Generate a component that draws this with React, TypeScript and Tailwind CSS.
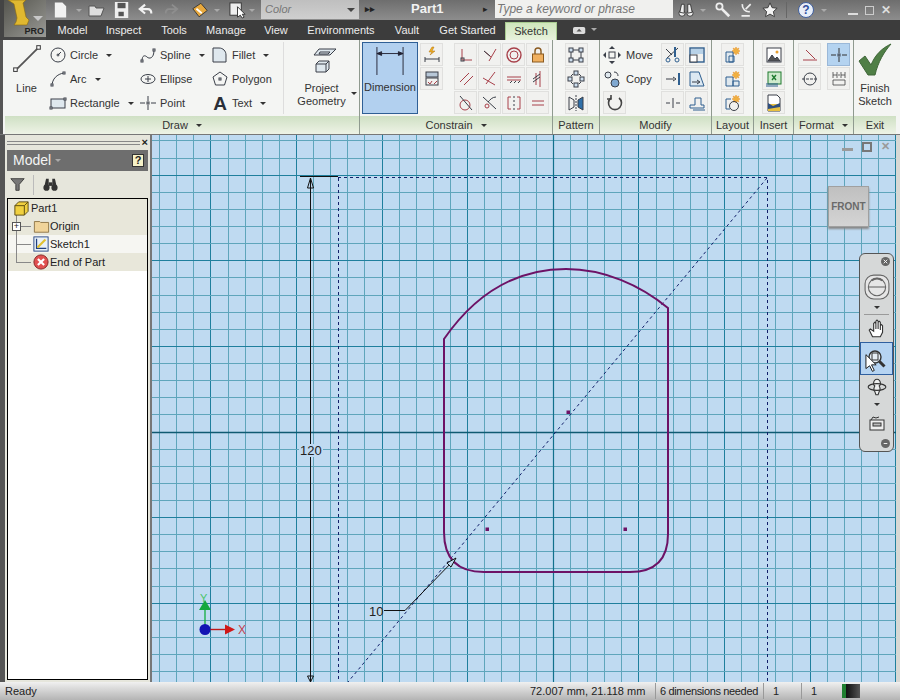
import type { ReactNode } from 'react';

const red = '#a8404a';
const dark = '#3a3f48';
const blue = '#2f5f8f';

function Ic({ children, s = 18 }: { children: ReactNode; s?: number }) {
  return (
    <svg viewBox="0 0 18 18" width={s} height={s} fill="none" stroke={dark} strokeWidth="1" className="shrink-0">
      {children}
    </svg>
  );
}

function Caret({ light }: { light?: boolean }) {
  return <span className={`inline-block w-0 h-0 border-x-[3px] border-x-transparent border-t-[3px] ${light ? 'border-t-[#aaaaaa]' : 'border-t-[#333333]'}`} />;
}

function DrawItem({ icon, label, caret }: { icon: ReactNode; label: string; caret?: boolean }) {
  return (
    <div className="h-6 flex items-center">
      <div className="w-5 flex justify-center shrink-0">{icon}</div>
      <span className="ml-[2px] text-[#333]">{label}</span>
      {caret && <span className="ml-2 flex"><Caret /></span>}
    </div>
  );
}

function Btn({ children, active }: { children?: ReactNode; active?: boolean }) {
  return (
    <div className={`w-[23px] h-[23px] flex items-center justify-center border ${active ? 'bg-[#b4d3f0] border-[#9ab8d8]' : 'bg-[#f1f1ef] border-[#e0e0de]'}`}>
      {children}
    </div>
  );
}

function Panel({ w, label, caret, children, last }: { w: string; label: string; caret?: boolean; children: ReactNode; last?: boolean }) {
  return (
    <div className={`${w} shrink-0 flex flex-col ${last ? '' : 'border-r border-[#8f9a8f]'}`}>
      <div className="h-[76px] flex overflow-hidden">{children}</div>
      <div className="h-[18px] bg-gradient-to-b from-[#cfe0c4] to-[#eef3e6] flex items-center justify-center gap-2 text-[#333]">
        {label}
        {caret && <Caret />}
      </div>
    </div>
  );
}

const constrainIcons: ReactNode[] = [
  <Ic key="a"><path d="M5 3v11h10" stroke={red} /><rect x="4" y="12" width="3" height="3" stroke={dark} /></Ic>,
  <Ic key="b"><path d="M3 5l7 6M15 3L8 15" stroke={red} /><path d="M3 5l6 5" stroke={dark} /></Ic>,
  <Ic key="c"><circle cx="9" cy="9" r="7" stroke={red} strokeWidth="1.4" /><circle cx="9" cy="9" r="4" stroke={red} /></Ic>,
  <Ic key="d"><rect x="3.5" y="8" width="11" height="8" fill="#f0b060" stroke="#8a5a20" /><path d="M6 8V5a3 3 0 016 0v3" stroke="#8a5a20" strokeWidth="1.4" /></Ic>,
  <Ic key="e"><path d="M3 12l9-9M7 15l9-9" stroke={red} /></Ic>,
  <Ic key="f"><path d="M14 2L5 14M2 8l12 7" stroke={red} /></Ic>,
  <Ic key="g"><path d="M2 7h14M2 10h14" stroke={red} /><path d="M5 13l2-2M9 13l2-2M13 13l2-2" stroke={dark} /></Ic>,
  <Ic key="h"><path d="M7 3v12M11 1v16" stroke={red} /><path d="M4 12l7-5M4 9l7-5" stroke={dark} /></Ic>,
  <Ic key="i"><circle cx="8" cy="11" r="5" stroke={red} /><path d="M3 2l12 14" stroke={dark} /></Ic>,
  <Ic key="j"><path d="M2 3l13 12M15 3c-4 0-6 3-8 5" stroke={dark} /><circle cx="6" cy="12" r="2" stroke={red} /></Ic>,
  <Ic key="k"><path d="M6 3H3v12h3M12 3h3v12h-3" stroke={red} /><path d="M9 2v14" stroke={dark} strokeDasharray="2 2" /></Ic>,
  <Ic key="l"><path d="M3 7h12M3 11h12" stroke={red} /></Ic>,
];

const modifyRows: ReactNode[][] = [
  [
    <Ic key="a"><path d="M2 3l6 6M14 2L3 12" stroke={dark} /><circle cx="4" cy="14" r="2" stroke={blue} /><circle cx="13" cy="14" r="2" stroke={blue} /><path d="M11 1v10" stroke={blue} strokeWidth="2" /></Ic>,
    <Ic key="b"><rect x="2" y="2" width="14" height="14" stroke={blue} strokeWidth="1.4" /><rect x="2" y="9" width="7" height="7" fill="#fff" stroke={dark} /><rect x="3" y="3" width="12" height="5" fill="#b8d2e8" stroke="none" /></Ic>,
  ],
  [
    <Ic key="a"><path d="M2 9h8M5 9h0M15 3v12" stroke={dark} /><path d="M15 3v12" stroke={blue} strokeWidth="2" /><path d="M9 7l3 2-3 2" stroke={dark} /></Ic>,
    <Ic key="b"><path d="M2 2h9l5 14H2z" stroke={blue} fill="#dce8f2" /><path d="M4 12h7M9 10l3 2-3 2" stroke={dark} /></Ic>,
  ],
  [
    <Ic key="a"><path d="M2 9h4M12 9h4M9 4v10" stroke={dark} /></Ic>,
    <Ic key="b"><path d="M2 14h14v-3h-3V4H7v7H2z" stroke={blue} /><path d="M5 16h12" stroke={blue} /></Ic>,
  ],
];

// grid lines are worked out here so that every line lands on a whole pixel
const step = 17.12;
const vLines = Array.from({ length: 60 }, (_, i) => ({ i: i - 30, x: Math.floor(553.3 + (i - 30) * step) + 0.5 })).filter((l) => l.x > 152 && l.x < 896);
const hLines = Array.from({ length: 60 }, (_, i) => ({ i: i - 30, y: Math.floor(432 + (i - 30) * step) + 0.5 })).filter((l) => l.y > 135 && l.y < 682);

function ProfileCanvas() {
  const profile = 'M444 339 C478 290 520 269 566 269 C604 269 640 285 668 308 V534 Q668 572 630 572 H484 Q444 572 444 532 Z';
  return (
    <svg viewBox="152 135 744 547" width="744" height="547" className="block">
      <rect x="152" y="135" width="744" height="547" fill="#bfdaf1" />
      {vLines.map((l) => (
        <path key={l.i} d={`M${l.x} 135V682`} stroke={l.i % 5 === 0 ? '#1f7f9d' : '#5fa5bb'} />
      ))}
      {hLines.map((l) => (
        <path key={l.i} d={`M152 ${l.y}H896`} stroke={l.i % 5 === 0 ? '#1f7f9d' : '#5fa5bb'} />
      ))}
      <path d="M152 432.5H896" stroke="#0f5a72" strokeWidth="1.5" />
      <path d="M553.5 135V682" stroke="#10708c" strokeWidth="1.2" />

      <path d="M338.5 178V682M338 177.5H767.5V682" stroke="#12206a" strokeDasharray="3 3" fill="none" />
      <path d="M767 178L348 682" stroke="#12206a" strokeDasharray="3 3" fill="none" />
      <path d="M300 176.5H338" stroke="#111" />
      <path d="M310.5 178V682" stroke="#111" />
      <path d="M310.5 178l-3 10h6z" fill="none" stroke="#111" />
      <path d="M310.5 682l-3-6h6z" fill="none" stroke="#111" />

      <path d={profile} stroke="#6d1266" strokeWidth="2" fill="none" />
      <rect x="566.5" y="410.5" width="3.5" height="3.5" fill="#6d1266" />
      <rect x="485.5" y="527.5" width="3.5" height="3.5" fill="#6d1266" />
      <rect x="623.5" y="527.5" width="3.5" height="3.5" fill="#6d1266" />

      <path d="M384 610.5H405L456 558" stroke="#111" fill="none" />
      <path d="M456 558l-9 5 4 4z" fill="#bfdaf1" stroke="#111" />

      <path d="M205 629V604" stroke="#1fb04a" strokeWidth="1.4" />
      <path d="M205 600l-6 10h12z" fill="#14a83e" />
      <path d="M205 629.5H228" stroke="#c01818" strokeWidth="1.4" />
      <path d="M235 629.5l-10-5v10z" fill="#d01818" />
      <circle cx="205" cy="629.5" r="5.5" fill="#1414b4" />
    </svg>
  );
}

function NavBar() {
  return (
    <div className="absolute left-[707px] top-[118px] w-[35px] h-[199px] bg-[#d6d8d8] border border-[#555] rounded-md flex flex-col items-center">
      <svg viewBox="0 0 10 10" width="9" height="9" className="mt-[3px] self-end mr-[3px]"><circle cx="5" cy="5" r="5" fill="#666" /><path d="M3 3l4 4M7 3l-4 4" stroke="#fff" /></svg>
      <svg viewBox="0 0 24 24" width="26" height="26" fill="none" stroke="#666" className="mt-[8px]">
        <rect x="1" y="1" width="22" height="22" rx="8" fill="#e6e6e6" />
        <circle cx="12" cy="12" r="8" /><path d="M4 12h16" /><path d="M7 6a8 8 0 0110 0" strokeWidth="2" />
      </svg>
      <div className="mt-[6px] flex"><Caret /></div>
      <div className="w-[25px] h-px bg-[#9a9a9a] mt-[5px]" />
      <svg viewBox="0 0 18 18" width="20" height="20" fill="#fff" stroke="#333" className="mt-[4px]">
        <path d="M5 16l-3-6 1-1 3 2V4l1-1 1 1v5V2l1-1 1 1v7V3l1-1 1 1v7V6l1-1 1 1v6l-2 4z" />
      </svg>
      <div className="relative w-[33px] h-[33px] mt-[3px] bg-[#b6d4f2] border border-[#2f5f9f] flex items-center justify-center">
        <svg viewBox="0 0 20 20" width="20" height="20" fill="none" stroke="#333">
          <circle cx="8" cy="8" r="6" fill="#e6eef5" strokeWidth="1.4" /><rect x="5" y="4" width="6" height="7" /><path d="M12.5 12.5l5 5" strokeWidth="3" />
        </svg>
        <svg viewBox="0 0 14 20" width="13" height="20" className="absolute left-[4px] top-[10px]">
          <path d="M1 1v15l4-3 3 6 2-1-3-6h5z" fill="#fff" stroke="#111" />
        </svg>
      </div>
      <svg viewBox="0 0 18 18" width="20" height="20" fill="none" stroke="#333" className="mt-[2px]">
        <path d="M9 2c2 0 3 2 3 3v2l-1 1c1 2 1 4 0 5l-1 3H8l-1-3c-1-1-1-3 0-5L6 7V5c0-1 1-3 3-3z" fill="#eef0f0" />
        <ellipse cx="9" cy="9" rx="8" ry="3" />
      </svg>
      <div className="mt-[6px] flex"><Caret /></div>
      <svg viewBox="0 0 18 18" width="18" height="18" fill="none" stroke="#333" className="mt-[8px]">
        <rect x="2" y="6" width="14" height="10" fill="#eee" /><rect x="5" y="9" width="8" height="3" fill="#bbb" /><path d="M3 6l2-3 3 1 3-1" />
      </svg>
      <svg viewBox="0 0 10 10" width="9" height="9" className="mt-auto mb-[3px] self-end mr-[3px]"><circle cx="5" cy="5" r="5" fill="#666" /><path d="M3 5h4" stroke="#fff" /></svg>
    </div>
  );
}

function TreeRow({ label, icon, light, plus, more }: { label: string; icon: ReactNode; light?: boolean; plus?: boolean; more?: boolean }) {
  return (
    <div className={`h-[18px] flex items-center ${light ? 'bg-[#f6f6f2]' : 'bg-[#e8e7da]'} text-[#222]`}>
      <div className="w-[24px] h-full relative shrink-0">
        <div className={`absolute left-[8px] top-0 w-px bg-[#888] ${more ? 'h-full' : 'h-[9px]'}`} />
        <div className="absolute left-[8px] top-[9px] w-[15px] h-px bg-[#888]" />
        {plus && (
          <div className="absolute left-[4px] top-[5px] w-[9px] h-[9px] border border-[#555] bg-white flex items-center justify-center text-[9px] leading-none">+</div>
        )}
      </div>
      <div className="w-[18px] flex justify-center shrink-0">{icon}</div>
      <span>{label}</span>
    </div>
  );
}

export default function App() {
  return (
    <div className="w-[900px] h-[700px] overflow-hidden flex flex-col bg-[#555] text-[11px]" style={{ fontFamily: '"Liberation Sans", Arial, sans-serif' }}>
      {/* title + tabs */}
      <div className="h-10 flex shrink-0">
        <div className="w-[46px] pl-[4px] bg-[#444] shrink-0">
          <div className="w-[42px] h-[37px] bg-gradient-to-br from-[#55554e] to-[#9a9a96] relative overflow-hidden">
            <svg viewBox="0 0 42 37" width="42" height="37" className="absolute left-0 top-0">
              <path d="M4 0h18l-3 3 3 14 3 3-2 5H10l2-3 1-4-3-14z" fill="#e0b830" stroke="#8a6a10" strokeWidth=".6" />
              <path d="M29 16h10l-5 5z" fill="#c8c8c8" />
            </svg>
            <span className="absolute right-[2px] bottom-[1px] text-[9px] leading-none font-bold text-[#222]">PRO</span>
          </div>
        </div>
        <div className="flex-1 flex flex-col min-w-0">
          <div className="h-5 bg-gradient-to-b from-[#6e6e6e] to-[#8d8d8d] flex items-center relative">
            <div className="flex items-center pl-[6px] shrink-0">
              <svg viewBox="0 0 18 18" width="17" height="18" className="shrink-0"><path d="M3 1h8l4 4v12H3z" fill="#f2f2f2" /></svg>
              <span className="ml-[7px] flex"><Caret light /></span>
              <svg viewBox="0 0 18 18" width="18" height="18" className="ml-[6px] shrink-0"><path d="M1 5h6l1 2h8l-3 8H1z" fill="#dedede" stroke="#555" /></svg>
              <svg viewBox="0 0 18 18" width="16" height="18" className="ml-[8px] shrink-0"><rect x="1" y="0" width="15" height="18" fill="#efefef" /><rect x="4" y="1" width="9" height="6" fill="#555" /><rect x="5" y="11" width="6" height="5" fill="#555" /></svg>
              <svg viewBox="0 0 18 18" width="16" height="16" fill="none" stroke="#f2f2f2" strokeWidth="2.4" className="ml-[8px] shrink-0"><path d="M8 3L2 8l6 5M3 8h8c3 0 4 2 4 5" /></svg>
              <svg viewBox="0 0 18 18" width="16" height="16" fill="none" stroke="#8e8e8e" strokeWidth="2" className="ml-[9px] shrink-0"><path d="M10 3l6 5-6 5M15 8H7c-3 0-4 2-4 5" /></svg>
              <svg viewBox="0 0 20 18" width="18" height="17" className="ml-[12px] shrink-0"><path d="M2 7l9-6 7 8-9 7z" fill="#e8a83c" stroke="#333" /><path d="M6 7l6 5" stroke="#fff" strokeWidth="2" /></svg>
              <span className="ml-[5px] flex"><Caret light /></span>
              <svg viewBox="0 0 18 18" width="17" height="17" fill="#eee" stroke="#333" className="ml-[9px] shrink-0"><rect x="1" y="1" width="12" height="13" /><path d="M9 5v11l3-2 2 3 2-1-2-3h3z" fill="#fff" /></svg>
              <span className="ml-[3px] flex"><Caret light /></span>
            </div>
            <div className="absolute left-[215px] top-0 w-[98px] h-[19px] bg-gradient-to-b from-[#bfbfbf] to-[#cfcfcf] flex items-center justify-between pl-1 pr-1 italic text-[#777]">
              Color
              <span className="inline-block w-0 h-0 border-x-[4px] border-x-transparent border-t-[4px] border-t-[#444]" />
            </div>
            <span className="absolute left-[319px] top-[5px] text-[#222] text-[9px] leading-none font-bold">▸▸</span>
            <span className="absolute left-[365px] top-[2px] text-[13px] leading-none font-bold text-[#f2f2f2]">Part1</span>
            <span className="absolute left-[437px] top-[5px] text-[#222] text-[9px] leading-none">▸</span>
            <div className="absolute left-[449px] top-0 w-[178px] h-[18px] bg-[#f0f0ee] flex items-center px-[2px] italic text-[12px] text-[#777]">
              Type a keyword or phrase
            </div>
            <div className="absolute left-[632px] top-0 h-5 flex items-center">
              <svg viewBox="0 0 18 18" width="16" height="17" fill="#eee" stroke="#333" className="shrink-0"><circle cx="4.5" cy="12" r="3.5" /><circle cx="13.5" cy="12" r="3.5" /><path d="M2 11l2-9h3v10zM16 11l-2-9h-3v10z" /></svg>
              <span className="ml-[6px] flex"><Caret light /></span>
              <svg viewBox="0 0 18 18" width="16" height="16" className="ml-[9px] shrink-0" fill="none"><circle cx="5" cy="5" r="3.5" stroke="#eee" strokeWidth="2" /><path d="M8 8l8 8" stroke="#eee" strokeWidth="3" /></svg>
              <svg viewBox="0 0 18 18" width="15" height="16" className="ml-[8px] shrink-0" fill="none" stroke="#eee" strokeWidth="2"><path d="M4 2a8 8 0 009 9M8 8l6-6M3 16h10" /></svg>
              <svg viewBox="0 0 18 18" width="16" height="16" className="ml-[8px] shrink-0"><path d="M9 1l2.4 5.4 5.6.6-4.2 3.8 1.2 5.7L9 13.6 4 16.5l1.2-5.7L1 7l5.6-.6z" fill="#f4f4f4" stroke="#333" /></svg>
              <div className="w-px h-4 bg-[#666] ml-[8px]" />
              <div className="ml-[11px] w-[16px] h-[16px] rounded-full bg-[#e8eef8] border border-[#3f5f9f] text-[#2f4f9f] font-bold text-[12px] leading-[14px] text-center shrink-0">?</div>
              <span className="ml-[7px] flex"><Caret light /></span>
              <div className="ml-[21px] w-[10px] h-[2px] bg-[#ddd] mt-2 shrink-0" />
              <div className="ml-[7px] w-[9px] h-[9px] border border-[#ccc] shrink-0" />
              <span className="ml-[7px] text-[#ddd] font-bold text-[12px] leading-none">✕</span>
            </div>
          </div>
          <div className="h-5 bg-[#3c3c3c] flex items-stretch text-[#ececec]">
            <div className="w-[2px]" />
            {[
              ['Model', 'w-[49px]'],
              ['Inspect', 'w-[53px]'],
              ['Tools', 'w-[48px]'],
              ['Manage', 'w-[56px]'],
              ['View', 'w-[44px]'],
              ['Environments', 'w-[86px]'],
              ['Vault', 'w-[46px]'],
              ['Get Started', 'w-[75px]'],
            ].map(([t, w]) => (
              <div key={t} className={`${w} flex items-center justify-center`}>{t}</div>
            ))}
            <div className="w-[52px] mt-[2px] bg-gradient-to-b from-[#cfe6bc] to-[#e8f2dc] border border-[#a8cc90] border-b-0 text-[#333] flex items-center justify-center">
              Sketch
            </div>
            <svg viewBox="0 0 16 10" width="14" height="9" className="ml-[16px] mt-[6px]"><rect x="0" y="1" width="14" height="8" rx="2" fill="#ddd" /><path d="M4 6l3-3 3 3" fill="#555" /></svg>
            <span className="ml-[4px] mt-[8px] flex self-start"><Caret light /></span>
          </div>
        </div>
      </div>

      {/* ribbon */}
      <div className="h-[95px] shrink-0 flex bg-[#f4f5f3] border-b border-b-[#777] pl-[5px] relative">
        <div className="absolute left-0 top-0 h-full w-[3px] bg-[#555]" />
        <div className="flex">
          <Panel w="w-[355px]" label="Draw" caret>
            <div className="w-[43px] shrink-0 flex flex-col items-center pt-[3px]">
              <Ic s={32}>
                <path d="M3 15L15 3" stroke="#555" />
                <rect x="1.5" y="14" width="2" height="2" fill="#fff" stroke="#444" strokeWidth=".6" />
                <rect x="14.5" y="1.5" width="2" height="2" fill="#fff" stroke="#444" strokeWidth=".6" />
              </Ic>
              <span className="mt-[5px] text-[#333]">Line</span>
            </div>
            <div className="w-[90px] shrink-0 pt-[3px]">
              <DrawItem label="Circle" caret icon={<Ic><circle cx="9" cy="9" r="7" /><circle cx="9" cy="9" r="1" /><path d="M9 9l3-3" /></Ic>} />
              <DrawItem label="Arc" caret icon={<Ic><path d="M3 16C3 9 8 4 15 3" /><rect x="2" y="14" width="2" height="2" fill="#fff" /><rect x="14" y="2" width="2" height="2" fill="#fff" /></Ic>} />
              <DrawItem label="Rectangle" caret icon={<Ic><rect x="2" y="5" width="14" height="9" fill="#dfe8ee" /><rect x="1" y="13" width="2" height="2" fill="#fff" /><rect x="15" y="4" width="2" height="2" fill="#fff" /></Ic>} />
            </div>
            <div className="w-[72px] shrink-0 pt-[3px]">
              <DrawItem label="Spline" caret icon={<Ic><path d="M3 15c0-6 3-6 5-4s7 2 7-7" /><rect x="2" y="14" width="2" height="2" fill="#fff" /><rect x="14" y="3" width="2" height="2" fill="#fff" /></Ic>} />
              <DrawItem label="Ellipse" icon={<Ic><ellipse cx="9" cy="9" rx="7" ry="4.5" /><path d="M9 6v6M6 9h6" /></Ic>} />
              <DrawItem label="Point" icon={<Ic><path d="M1 9h5M12 9h5M9 2v5M9 11v5" /><rect x="8" y="8" width="2" height="2" /></Ic>} />
            </div>
            <div className="w-[73px] shrink-0 pt-[3px]">
              <DrawItem label="Fillet" caret icon={<Ic><path d="M2 16V2h6c4 0 7 3 7 7v7z" fill="#dfe8ee" /></Ic>} />
              <DrawItem label="Polygon" icon={<Ic><path d="M9 2l7 5-2.5 8h-9L2 7z" /><rect x="8" y="8" width="2" height="2" /></Ic>} />
              <DrawItem label="Text" caret icon={<span className="text-[19px] leading-none font-bold text-[#2a2f38]">A</span>} />
            </div>
            <div className="flex-1 flex flex-col items-center border-l border-[#ddd] my-[2px] pt-[3px] text-[#333] leading-[13px] relative">
              <svg viewBox="0 0 30 30" width="30" height="34" fill="#dfe8ee" stroke={dark}>
                <path d="M7 8l5-6h17l-6 6z" /><path d="M13 5h10l-2 2h-9z" />
                <path d="M9 17l3-3h10v8l-3 3H9zM19 17l3-3M9 17h10v8" />
              </svg>
              <span className="mt-[3px]">Project</span>
              <span>Geometry</span>
              <span className="absolute right-[2px] top-[50px] flex"><Caret /></span>
            </div>
          </Panel>
          <Panel w="w-[193px]" label="Constrain" caret>
            <div className="w-[56px] h-[72px] mt-[2px] ml-[2px] bg-[#b2d0ef] border border-[#2f5f95] flex flex-col items-center shrink-0">
              <svg viewBox="0 0 34 30" width="32" height="28" fill="none" stroke="#223" className="mt-[4px]">
                <path d="M3 0v30M31 0v30M3 7h28" />
                <path d="M3 7l5-2v4zM31 7l-5-2v4z" fill="#223" />
              </svg>
              <span className="mt-[4px] text-[#333]">Dimension</span>
            </div>
            <div className="w-[34px] shrink-0 pl-[2px] pt-[3px] flex flex-col gap-[1px]">
              <Btn><Ic><path d="M9 1L6 6h3L7 9l5-4H9l2-4z" fill="#f0b020" stroke="#b07010" strokeWidth=".5" /><path d="M2 13h14M2 11v5M16 11v5" /></Ic></Btn>
              <Btn><Ic><rect x="3" y="2" width="12" height="5" fill="#b8c8d8" /><rect x="3" y="8" width="12" height="7" /><path d="M5 12l2 2 2-3M11 14l3-3" stroke={red} /></Ic></Btn>
            </div>
            <div className="grid grid-cols-[repeat(4,24px)] grid-rows-[repeat(3,24px)] pt-[3px] ml-[2px]">
              {constrainIcons.map((ic, i) => (
                <Btn key={i}>{ic}</Btn>
              ))}
            </div>
          </Panel>
          <Panel w="w-[47px]" label="Pattern">
            <div className="flex flex-col items-center w-full pt-[3px] gap-[1px]">
              <Btn><Ic><rect x="2" y="2" width="4" height="4" fill="#cfe0f0" /><rect x="12" y="2" width="4" height="4" fill="#cfe0f0" /><rect x="2" y="12" width="4" height="4" fill="#cfe0f0" /><rect x="12" y="12" width="4" height="4" fill="#cfe0f0" /><path d="M6 4h6M4 6v6M14 6v6M6 14h6" /></Ic></Btn>
              <Btn><Ic><rect x="7" y="1" width="4" height="4" fill="#cfe0f0" /><rect x="1" y="7" width="4" height="4" fill="#cfe0f0" /><rect x="13" y="7" width="4" height="4" fill="#cfe0f0" /><rect x="7" y="13" width="4" height="4" fill="#cfe0f0" /><path d="M6 4L4 6M12 4l2 2M4 12l2 2M14 12l-2 2" /></Ic></Btn>
              <Btn><Ic><path d="M2 3l5 3v7l-5 3z" /><path d="M16 3l-5 3v7l5 3z" fill="#2f6fa8" /><path d="M9 1v16" strokeDasharray="2 1" /></Ic></Btn>
            </div>
          </Panel>
          <Panel w="w-[112px]" label="Modify">
            <div className="w-[61px] shrink-0 pl-[3px] pt-[3px]">
              <div className="h-6 flex items-center text-[#333]">
                <svg viewBox="0 0 18 18" width="18" height="18" fill={dark} className="shrink-0"><path d="M9 0l3 3H6zM9 18l-3-3h6zM0 9l3-3v6zM18 9l-3 3V6z" /><rect x="6" y="6" width="6" height="6" fill="none" stroke={dark} /></svg>
                <span className="ml-[5px]">Move</span>
              </div>
              <div className="h-6 flex items-center text-[#333]">
                <svg viewBox="0 0 18 18" width="18" height="18" fill="none" stroke={dark} className="shrink-0"><circle cx="5" cy="5" r="3" fill="#dfe8ee" /><circle cx="12" cy="13" r="4" fill="#7fa8d0" /><path d="M11 2c3 0 4 2 4 4" /></svg>
                <span className="ml-[5px]">Copy</span>
              </div>
              <Btn><svg viewBox="0 0 18 18" width="18" height="18" fill="none" stroke="#444" strokeWidth="1.6"><path d="M5 4a6.5 6.5 0 108 0" /><path d="M5 1v4H1" /></svg></Btn>
            </div>
            <div className="flex flex-col pt-[3px] gap-[1px]">
              {modifyRows.map((r, i) => (
                <div key={i} className="flex gap-[1px]">
                  <Btn>{r[0]}</Btn>
                  <Btn>{r[1]}</Btn>
                </div>
              ))}
            </div>
          </Panel>
          <Panel w="w-[42px]" label="Layout">
            <div className="flex flex-col items-center w-full pt-[3px] gap-[1px]">
              {[0, 1, 2].map((k) => (
                <Btn key={k}>
                  <Ic>
                    <path d="M12 1l1 2 2-1-1 2 2 1-2 1 1 2-2-1-1 2-1-2-2 1 1-2-2-1 2-1-1-2 2 1z" stroke="#e89020" fill="#f0b040" strokeWidth=".5" />
                    {k === 0 && <path d="M2 6h7v10H2zM5 10h5v6H5z" fill="#dfe8ee" stroke={blue} />}
                    {k === 1 && <path d="M2 7h7v9H2zM9 11h6v5H9z" fill="#dfe8ee" stroke={blue} />}
                    {k === 2 && <circle cx="10" cy="12" r="4.5" stroke={dark} />}
                    {k === 2 && <path d="M2 5h5M2 5v10h4" stroke={blue} />}
                  </Ic>
                </Btn>
              ))}
            </div>
          </Panel>
          <Panel w="w-[40px]" label="Insert">
            <div className="flex flex-col items-center w-full pt-[3px] gap-[1px]">
              <Btn><Ic><rect x="2" y="2" width="14" height="14" fill="#fff" /><path d="M3 15l4-6 3 4 2-2 3 4z" fill="#555" /><circle cx="12" cy="6" r="1.5" fill="#e8a030" stroke="none" /></Ic></Btn>
              <Btn><Ic><rect x="3" y="2" width="13" height="12" fill="#cfeacd" stroke="#1f7a2f" /><path d="M7 5l4 5M11 5l-4 5" stroke="#1f7a2f" strokeWidth="1.4" /><path d="M1 14h12M1 16h12" stroke={blue} /></Ic></Btn>
              <Btn><Ic><path d="M3 1h9l3 3v13H3z" fill="#fff" /><path d="M3 17V10h12v7z" fill="#e8c040" stroke="none" /><path d="M3 9l5 3 7-3v4L3 15z" fill="#2f4f7f" stroke="none" /></Ic></Btn>
            </div>
          </Panel>
          <Panel w="w-[60px]" label="Format" caret>
            <div className="grid grid-cols-[repeat(2,24px)] auto-rows-[24px] gap-x-[5px] pl-[4px] pt-[3px]">
              <Btn><Ic><path d="M2 14h14M5 4l9 9" stroke={red} /></Ic></Btn>
              <Btn active><Ic><path d="M1 9h5M12 9h5M9 2v5M9 11v5" stroke="#333" /><rect x="8" y="8" width="2" height="2" /></Ic></Btn>
              <Btn><Ic><circle cx="9" cy="9" r="6" /><path d="M1 9h16" strokeDasharray="3 1" /></Ic></Btn>
              <Btn><Ic><path d="M3 2v6M7 2v6M3 5h4M11 2v6M15 2v6M11 5h4M8 5h2M3 10h12v5H3z" stroke="#444" strokeWidth=".8" /></Ic></Btn>
            </div>
          </Panel>
          <Panel w="w-[42px]" label="Exit" last>
            <div className="w-full flex flex-col items-center pt-[3px] text-[#333] leading-[13px]">
              <svg viewBox="0 0 36 34" width="36" height="34">
                <path d="M2 18l6-5 6 9C18 12 25 5 34 1c-7 8-13 18-16 31h-7z" fill="#4f7f46" stroke="#3f6638" />
              </svg>
              <span className="mt-[5px]">Finish</span>
              <span>Sketch</span>
            </div>
          </Panel>
        </div>
      </div>

      {/* body */}
      <div className="flex-1 min-h-0 flex bg-[#d8d8d4]">
        <div className="w-[152px] shrink-0 bg-[#e6e6dc] flex flex-col border-l-[5px] border-l-[#555] border-r-2 border-r-[#777] pl-[2px] pr-[2px] pb-[2px]">
          <div className="h-[15px] flex items-center gap-[2px] shrink-0">
            <div className="flex-1 h-[4px] border-y border-[#888]" />
            <span className="text-[11px] font-bold leading-none text-[#222]">×</span>
          </div>
          <div className="h-[21px] shrink-0 bg-[#6e6e6e] flex items-center justify-between pl-[6px] pr-[4px] text-[14px] text-[#f4f4f4]">
            <span className="flex items-center gap-[4px]">Model <Caret light /></span>
            <span className="w-[12px] h-[13px] bg-[#f6f2c8] border border-[#333] text-[#222] text-[11px] font-bold leading-[11px] text-center">?</span>
          </div>
          <div className="h-[27px] flex items-center pl-[3px] shrink-0">
            <svg viewBox="0 0 18 18" width="15" height="15"><path d="M1 2h16l-6 7v7H7V9z" fill="#777" stroke="#333" /></svg>
            <div className="w-px h-5 bg-[#bbb] mx-[8px]" />
            <svg viewBox="0 0 18 18" width="17" height="16" fill="#333"><circle cx="4.5" cy="12" r="3.5" /><circle cx="13.5" cy="12" r="3.5" /><path d="M2 11l2-9h3v10zM16 11l-2-9h-3v10z" /><rect x="7" y="6" width="4" height="4" /></svg>
          </div>
          <div className="flex-1 bg-white border border-black overflow-hidden">
            <div className="h-[18px] flex items-center bg-[#e8e7da] text-[#222] relative">
              <div className="absolute left-[8px] top-[14px] h-[4px] w-px bg-[#888]" />
              <svg viewBox="0 0 18 18" width="17" height="17" className="ml-[5px] relative">
                <path d="M2 6l4-4h10v10l-4 4H2z" fill="#f0d040" stroke="#5a4a10" /><path d="M2 6h10v10M12 6l4-4" fill="none" stroke="#5a4a10" />
              </svg>
              <span className="ml-px">Part1</span>
            </div>
            <TreeRow label="Origin" plus more icon={<svg viewBox="0 0 18 18" width="17" height="16"><path d="M1 4h6l1 1h9v11H1z" fill="#f0d49a" stroke="#8a7040" /></svg>} />
            <TreeRow label="Sketch1" light more icon={<svg viewBox="0 0 18 18" width="16" height="16"><rect x="1" y="1" width="16" height="16" fill="#e8f0f8" stroke="#1f3f7f" /><path d="M4 3v11h11" stroke="#1f3f7f" fill="none" strokeWidth="1.4" /><path d="M5 13l9-9" stroke="#e0c030" strokeWidth="2.4" /></svg>} />
            <TreeRow label="End of Part" icon={<svg viewBox="0 0 18 18" width="16" height="16"><circle cx="9" cy="9" r="8" fill="#e05050" stroke="#802020" /><path d="M5.5 5.5l7 7M12.5 5.5l-7 7" stroke="#fff" strokeWidth="2.4" /></svg>} />
          </div>
        </div>

        <div className="flex-1 min-w-0 relative">
          <ProfileCanvas />
          {/* overlays on the canvas */}
          <span className="absolute left-[147px] top-[309px] text-[13px] leading-none px-px bg-[#bfdaf1] text-[#222]">120</span>
          <span className="absolute left-[217px] top-[470px] text-[13px] leading-none text-[#222]">10</span>
          <span className="absolute left-[48px] top-[458px] text-[11px] leading-none text-[#4cc46a]">Y</span>
          <span className="absolute left-[86px] top-[489px] text-[12px] leading-none text-[#c04050]">X</span>
          <div className="absolute left-[690px] top-[6px] flex items-center gap-[9px]">
            <div className="w-[11px] h-[3px] bg-[#9a9a9a] mt-[6px]" />
            <div className="w-[10px] h-[10px] border-2 border-[#777]" />
            <span className="text-[11px] font-bold leading-none text-[#9a9a9a]">✕</span>
          </div>
          <div className="absolute left-[676px] top-[51px] w-[41px] h-[41px] bg-gradient-to-b from-[#c0c0c0] to-[#d4d4d4] border border-[#a0a0a0] shadow-[0_2px_2px_#888] flex items-center justify-center text-[10px] font-bold text-[#6a6a6a]">
            FRONT
          </div>
          <NavBar />
        </div>
      </div>

      {/* status bar */}
      <div className="h-[18px] shrink-0 bg-gradient-to-b from-[#f0f0f0] to-[#b4b4b4] flex items-center text-[11px] text-[#222] whitespace-nowrap">
        <span className="w-[530px] pl-[5px]">Ready</span>
        <span className="w-[125px]">72.007 mm, 21.118 mm</span>
        <span className="w-[108px] pl-[4px] border-l border-[#999] tracking-[-0.35px]">6 dimensions needed</span>
        <span className="w-[38px] pl-[9px] border-l border-[#999]">1</span>
        <span className="w-[41px] pl-[9px] border-l border-[#999]">1</span>
        <div className="w-[4px] h-[14px] bg-[#1f7f2f]" />
        <div className="w-[14px] h-[14px] bg-gradient-to-r from-[#111] to-[#555]" />
      </div>
    </div>
  );
}
